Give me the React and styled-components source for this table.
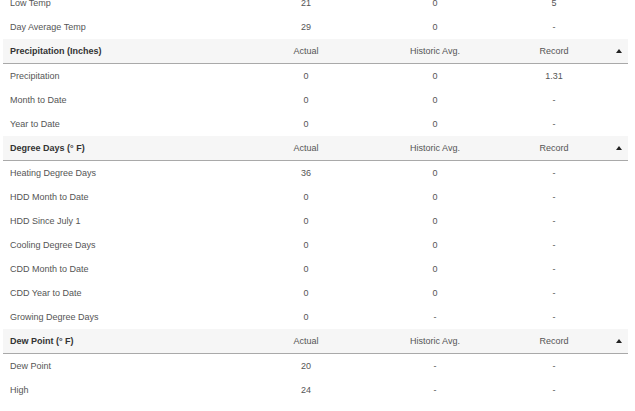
import React from "react";
import styled, { createGlobalStyle } from "styled-components";

const Global = createGlobalStyle`
  html, body { margin: 0; padding: 0; background: #fff; overflow: hidden; }
  body { font-family: "Liberation Sans", Arial, sans-serif; }
`;

const Page = styled.div`
  width: 635px;
  height: 411px;
  overflow: hidden;
  box-sizing: border-box;
  padding: 0 7px 0 3px;
`;

const Table = styled.div`
  margin-top: -9px;
  display: flex;
  flex-direction: column;
`;

const cols = "249px 108px 150px 88px 30px";

const HeaderRow = styled.div`
  display: grid;
  grid-template-columns: ${cols};
  height: 24px;
  align-items: center;
  background: #f6f6f6;
  border-bottom: 1px solid #a9a9a9;
  font-size: 9px;
  color: #555;
`;

const Row = styled.div`
  display: grid;
  grid-template-columns: ${cols};
  height: 24px;
  align-items: center;
  font-size: 9px;
  color: #555;
`;

const Label = styled.div`
  padding-left: 7px;
  font-weight: ${(p) => (p.$bold ? 700 : 400)};
  color: ${(p) => (p.$bold ? "#333" : "#555")};
  white-space: nowrap;
`;

const Cell = styled.div`
  text-align: center;
  white-space: nowrap;
`;

const Toggle = styled.div`
  display: flex;
  justify-content: flex-end;
  padding-right: 6px;
`;

const Caret = styled.span`
  width: 0;
  height: 0;
  border-left: 3.5px solid transparent;
  border-right: 3.5px solid transparent;
  border-bottom: 4px solid #222;
`;

const sections = [
  {
    title: null,
    rows: [
      ["Low Temp", "21", "0", "5"],
      ["Day Average Temp", "29", "0", "-"],
    ],
  },
  {
    title: "Precipitation (Inches)",
    rows: [
      ["Precipitation", "0", "0", "1.31"],
      ["Month to Date", "0", "0", "-"],
      ["Year to Date", "0", "0", "-"],
    ],
  },
  {
    title: "Degree Days (° F)",
    rows: [
      ["Heating Degree Days", "36", "0", "-"],
      ["HDD Month to Date", "0", "0", "-"],
      ["HDD Since July 1", "0", "0", "-"],
      ["Cooling Degree Days", "0", "0", "-"],
      ["CDD Month to Date", "0", "0", "-"],
      ["CDD Year to Date", "0", "0", "-"],
      ["Growing Degree Days", "0", "-", "-"],
    ],
  },
  {
    title: "Dew Point (° F)",
    rows: [
      ["Dew Point", "20", "-", "-"],
      ["High", "24", "-", "-"],
      ["Low", "17", "-", "-"],
    ],
  },
];

export default function App() {
  return (
    <>
      <Global />
      <Page>
        <Table>
          {sections.map((s, i) => (
            <React.Fragment key={i}>
              {s.title && (
                <HeaderRow>
                  <Label $bold>{s.title}</Label>
                  <Cell>Actual</Cell>
                  <Cell>Historic Avg.</Cell>
                  <Cell>Record</Cell>
                  <Toggle>
                    <Caret />
                  </Toggle>
                </HeaderRow>
              )}
              {s.rows.map((r) => (
                <Row key={r[0]}>
                  <Label>{r[0]}</Label>
                  <Cell>{r[1]}</Cell>
                  <Cell>{r[2]}</Cell>
                  <Cell>{r[3]}</Cell>
                  <div />
                </Row>
              ))}
            </React.Fragment>
          ))}
        </Table>
      </Page>
    </>
  );
}
